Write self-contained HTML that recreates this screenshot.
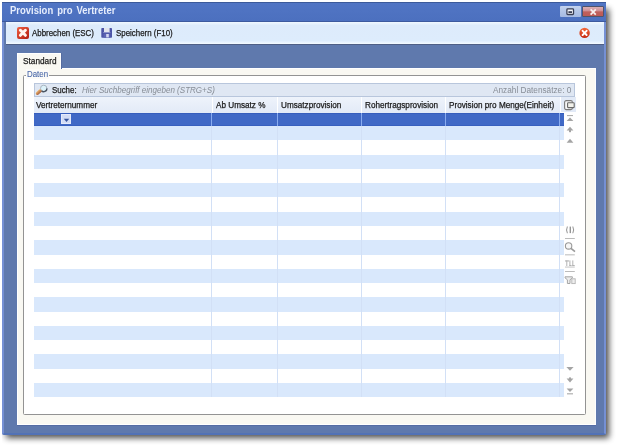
<!DOCTYPE html>
<html><head><meta charset="utf-8">
<style>
*{margin:0;padding:0;box-sizing:border-box}
html,body{width:617px;height:446px;overflow:hidden;background:#fff;font-family:"Liberation Sans",sans-serif;font-size:8.5px;color:#222}
.tt,.ht,.sx{transform:scaleX(0.93);transform-origin:0 0}
.ht{transform:scaleX(0.96)}
.a{position:absolute}
#shwrap{left:2px;top:2px;width:615px;height:444px;overflow:hidden}
#shadow{left:4px;top:7px;width:603px;height:429px;background:#000;opacity:.7;filter:blur(3px)}
#win{left:2px;top:2px;width:604px;height:433px;border-radius:0 0 2px 2px;background:#5f79ad;border:2px solid #7590d4;border-top:0;border-bottom:2px solid #5272b6}
#title{left:2px;top:2px;width:604px;height:20px;background:linear-gradient(#5175c4,#4c70bf);border-top:1px solid #3c5a9a;border-bottom:1px solid #3d5a9e}
#ttext{left:9.5px;top:4px;font-weight:bold;font-size:10.6px;color:#e6edfc;white-space:nowrap;word-spacing:1.5px;transform:scaleX(0.895);transform-origin:0 0}
#bres{left:560px;top:6px;width:21px;height:11px;background:linear-gradient(#c4d3ee,#b4c6e8 45%,#a6bae2);border-radius:1px}
#bclose{left:582px;top:6px;width:22px;height:11px;background:linear-gradient(#dcb0b4,#d09298 40%,#c0605c 55%,#bc5a56);border:1px solid #50546a;border-radius:1px}
#toolbar{left:6px;top:22px;width:598px;height:23px;background:linear-gradient(#f0f8ff,#ddebfb 15%,#ddecfc 85%,#f4faff);border-bottom:1px solid #4f5f85}
.tt{white-space:nowrap;color:#1a1a1a;-webkit-text-stroke:0.25px #1a1a1a}
#panel{left:17px;top:68px;width:579px;height:357px;background:#f9f8f2;border:1px solid #fff;border-right-color:#fcfdff}
#pbot{left:17px;top:425px;width:579px;height:1px;background:#546ca4}
#tab{left:17px;top:53px;width:44px;height:16px;background:#f9f8f2;border:1px solid #fff;border-bottom:0;box-shadow:1px 0 0 #566ca0}
#gbox{left:23px;top:75px;width:563px;height:340px;border:1px solid #939393;border-radius:1.5px;background:#fff}
#glabel{left:26px;top:69px;width:23px;height:10px;background:#fcfbf8}
#gltext{left:27px;top:69px;color:#4a68a8;white-space:nowrap;-webkit-text-stroke:0.1px #4a68a8}
#search{left:34px;top:83px;width:541px;height:14px;background:#dfe7f3;border:1px solid #b8c6dc}
#hdr{left:34px;top:97px;width:527px;height:16px;background:linear-gradient(#eef3fb,#e2eaf7)}
.hsep{top:97px;width:1px;height:16px;background:#fff}
.ht{top:100px;white-space:nowrap;color:#1a1a1a;-webkit-text-stroke:0.25px #1a1a1a}
#hicon{left:561px;top:97px;width:15px;height:15px;background:#e2eaf7}
#sel{left:34px;top:113px;width:530px;height:13px;background:#4069c6;border-top:1px solid #365ebd;border-bottom:1px solid #3860bf}
.ssep{top:113px;width:1px;height:13px;background:#88abef}
.row{left:34px;width:530px;background:#d9e8fc}
.dsep{top:126px;width:1px;height:271px;background:#d2e0f6}
#dd{left:61px;top:114px;width:10px;height:10px;background:#d2dcf5;border:1px solid #e4eafb}
</style></head><body>
<div class="a" id="shwrap"><div class="a" id="shadow"></div></div>
<div class="a" id="win"></div>
<div class="a" id="title"></div>
<div class="a" id="ttext">Provision pro Vertreter</div>
<div class="a" id="bres"></div>
<svg class="a" style="left:566px;top:8px" width="9" height="8"><rect x="0.9" y="0.9" width="6.6" height="5.6" rx="0.8" fill="#f4f6fb" stroke="#3a3f55" stroke-width="1.3"/><rect x="2.4" y="3.2" width="3.6" height="1.8" fill="#3a3f55"/></svg>
<div class="a" id="bclose"></div>
<svg class="a" style="left:589px;top:8px" width="9" height="8"><path d="M1.6 1.4L6.8 6.6M6.8 1.4L1.6 6.6" stroke="#f8f0f0" stroke-width="1.7"/></svg>
<div class="a" id="toolbar"></div>
<svg class="a" style="left:17px;top:27px" width="12" height="12"><defs><linearGradient id="rg" x1="0" y1="0" x2="1" y2="1"><stop offset="0" stop-color="#f06040"/><stop offset="1" stop-color="#b01c10"/></linearGradient></defs><rect x="0" y="0" width="12" height="12" rx="2" fill="url(#rg)"/><path d="M3.4 3.3L8.4 8.3M8.4 3.3L3.4 8.3" stroke="#fff6f0" stroke-width="3" stroke-linecap="round"/></svg>
<div class="a tt" style="left:32px;top:28.3px">Abbrechen (ESC)</div>
<svg class="a" style="left:101px;top:28px" width="12" height="10"><rect x="0.3" y="0" width="10.7" height="9.7" rx="0.8" fill="#4c54a6"/><rect x="3" y="0" width="5.6" height="4" fill="#e2e4ec"/><rect x="2.2" y="4" width="7.2" height="0.8" fill="#9ca2d4"/><rect x="2.6" y="5.6" width="6.6" height="4.1" fill="#5c64b4"/><rect x="5.2" y="6" width="2.6" height="3.4" fill="#d4d8f0"/></svg>
<div class="a tt" style="left:116px;top:28.3px">Speichern (F10)</div>
<svg class="a" style="left:579px;top:27px" width="12" height="12"><defs><linearGradient id="cg" x1="0" y1="0" x2="0" y2="1"><stop offset="0" stop-color="#f46a3a"/><stop offset="1" stop-color="#c42810"/></linearGradient></defs><circle cx="5.6" cy="5.9" r="5.2" fill="url(#cg)"/><path d="M3.6 3.8L7.6 8M7.6 3.8L3.6 8" stroke="#fff" stroke-width="1.9" stroke-linecap="round"/></svg>
<div class="a" id="panel"></div><div class="a" id="pbot"></div>
<div class="a" id="tab"></div>
<div class="a tt" style="left:23px;top:56px;transform:scaleX(0.97)">Standard</div>
<div class="a" id="gbox"></div>
<div class="a" id="glabel"></div><div class="a sx" id="gltext">Daten</div>
<div class="a" id="search"></div>
<svg class="a" style="left:34px;top:83px" width="16" height="14"><defs><linearGradient id="hg" x1="0" y1="0" x2="1" y2="1"><stop offset="0" stop-color="#f0b870"/><stop offset="1" stop-color="#a05a3a"/></linearGradient></defs><circle cx="9.7" cy="5.4" r="3.2" fill="#dcf2fa" stroke="#a8b4c0" stroke-width="1"/><path d="M12.9 5.4A3.2 3.2 0 0 1 7.4 7.7" fill="none" stroke="#4a5462" stroke-width="1.5"/><path d="M3.4 10.4L6 8" stroke="url(#hg)" stroke-width="3.2" stroke-linecap="round"/></svg>
<div class="a tt" style="left:52px;top:85px">Suche:</div>
<div class="a sx" style="left:82px;top:85px;font-style:italic;color:#878d96;white-space:nowrap;transform:scaleX(0.945)">Hier Suchbegriff eingeben (STRG+S)</div>
<div class="a sx" style="left:493px;top:85px;color:#878d96;white-space:nowrap;transform:scaleX(0.97)">Anzahl Datensätze: 0</div>
<div class="a" id="hdr"></div>
<div class="a hsep" style="left:212px"></div>
<div class="a hsep" style="left:277px"></div>
<div class="a hsep" style="left:361px"></div>
<div class="a hsep" style="left:445px"></div>
<div class="a hsep" style="left:560px"></div>
<div class="a" id="hicon"></div>
<div class="a ht" style="left:36px">Vertreternummer</div>
<div class="a ht" style="left:216px">Ab Umsatz %</div>
<div class="a ht" style="left:281px">Umsatzprovision</div>
<div class="a ht" style="left:365px">Rohertragsprovision</div>
<div class="a ht" style="left:449px">Provision pro Menge(Einheit)</div>
<svg class="a" style="left:564px;top:100px" width="12" height="11"><rect x="0.6" y="0.6" width="7.8" height="9" rx="1.6" fill="#f6f6f6" stroke="#7c7c7c" stroke-width="1.1"/><rect x="3.6" y="2.8" width="6.6" height="4.8" rx="0.6" fill="#f2f2ec" stroke="#686868" stroke-width="1.1"/></svg>
<div class="a" id="sel"></div>
<div class="a ssep" style="left:211px"></div>
<div class="a ssep" style="left:277px"></div>
<div class="a ssep" style="left:361px"></div>
<div class="a ssep" style="left:445px"></div>
<div class="a ssep" style="left:559px"></div>
<div class="a" id="dd"></div>
<svg class="a" style="left:63px;top:117.5px" width="7" height="5"><path d="M0.8 0.8H6.2L3.5 3.9Z" fill="#34539e"/></svg>
<div class="a row" style="top:126.00px;height:14.28px"></div>
<div class="a row" style="top:154.56px;height:14.28px"></div>
<div class="a row" style="top:183.12px;height:14.28px"></div>
<div class="a row" style="top:211.68px;height:14.28px"></div>
<div class="a row" style="top:240.24px;height:14.28px"></div>
<div class="a row" style="top:268.80px;height:14.28px"></div>
<div class="a row" style="top:297.36px;height:14.28px"></div>
<div class="a row" style="top:325.92px;height:14.28px"></div>
<div class="a row" style="top:354.48px;height:14.28px"></div>
<div class="a row" style="top:383.04px;height:14.28px"></div>
<div class="a dsep" style="left:211px"></div>
<div class="a dsep" style="left:277px"></div>
<div class="a dsep" style="left:361px"></div>
<div class="a dsep" style="left:445px"></div>
<div class="a dsep" style="left:559px"></div>
<!-- right nav icons -->
<svg class="a" style="left:560px;top:110px" width="20" height="290">
 <g fill="#a4a4a4">
  <rect x="7" y="5" width="6" height="1.1" fill="#b0b0b0"/>
  <path d="M6.6 11H13.4L10 7.4Z"/>
  <path d="M6.6 20.4H13.4L10 16.8Z"/><rect x="9" y="20" width="2" height="2.2"/>
  <path d="M6.6 32.8H13.4L10 28.8Z"/>
  <path d="M6.4 257H13.6L10 260.8Z"/>
  <path d="M6.6 268.6H13.4L10 272.4Z"/><rect x="9" y="267.4" width="2" height="2"/>
  <path d="M6.6 278.6H13.4L10 282Z"/><rect x="7" y="283.2" width="6" height="1.2" fill="#b0b0b0"/>
 </g>
 <g fill="#969696">
  <path d="M7.9 116.4Q6.3 119.8 7.9 123.2H6.9Q5.2 119.8 6.9 116.4Z"/>
  <rect x="9.6" y="116.6" width="1.4" height="6.5"/>
  <path d="M12.3 116.4Q13.9 119.8 12.3 123.2H13.3Q15 119.8 13.3 116.4Z"/>
 </g>
 <g fill="#b4b4b4">
  <rect x="5" y="128" width="9.8" height="0.9"/>
  <rect x="5" y="144.4" width="9.8" height="0.9"/>
  <rect x="5" y="161" width="9.8" height="0.9"/>
 </g>
 <circle cx="8.6" cy="135.9" r="3.2" fill="#f6f6f6" stroke="#9a9a9a" stroke-width="1.1"/>
 <path d="M11 138.4L15 141.6" stroke="#9a9a9a" stroke-width="1.7"/>
 <g fill="#b2b2b2">
  <rect x="5" y="150.4" width="4" height="1.1"/><rect x="6.3" y="150.4" width="1" height="5.6"/>
  <rect x="9.4" y="150.4" width="1" height="5.6"/><rect x="9.4" y="155" width="2.2" height="1"/>
  <rect x="12.3" y="150.4" width="1" height="5.6"/><rect x="12.3" y="155" width="2.4" height="1"/>
  <rect x="5" y="156.6" width="9.8" height="0.9" fill="#bdbdbd"/>
 </g>
 <path d="M5 166.8H12.4V167.8L10 169.8V173.5H7.4V169.8L5 167.8Z" fill="#ececec" stroke="#a6a6a6" stroke-width="1"/>
 <rect x="11.8" y="168.8" width="3.4" height="4.8" fill="#eeeeee" stroke="#b4b4b4" stroke-width="0.9"/>
</svg>
</body></html>
